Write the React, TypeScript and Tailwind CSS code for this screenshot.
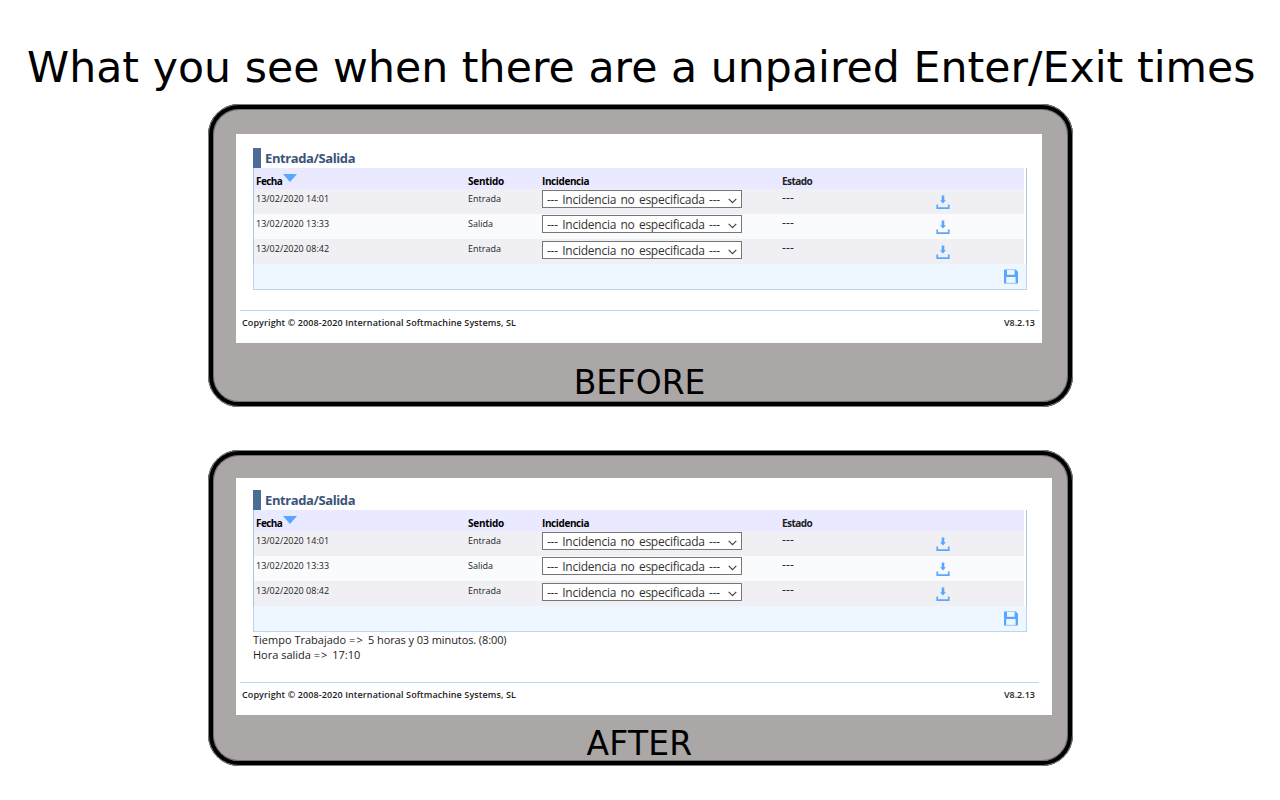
type Punch = { date: string; direction: string };

const punches: Punch[] = [
  { date: '13/02/2020 14:01', direction: 'Entrada' },
  { date: '13/02/2020 13:33', direction: 'Salida' },
  { date: '13/02/2020 08:42', direction: 'Entrada' },
];

const columns = 'grid grid-cols-[212px_74px_240px_154px_1fr] pl-[2px]';

function DownloadIcon() {
  return (
    <svg width="14" height="15" viewBox="0 0 14 15" className="text-[#58a6ff]" fill="currentColor">
      <path d="M5.7 0.6h2.6v4.6h1.6L7 8.6 4.1 5.2h1.6z" />
      <path d="M0.4 9.4h1.7v2.8h9.8V9.4h1.7V14H0.4z" />
    </svg>
  );
}

function SaveIcon() {
  return (
    <svg width="14" height="15" viewBox="0 0 14 15" fill="none">
      <path d="M0 0.5h11.8L14 2.8v11.7H0z" fill="#58a6ff" />
      <path d="M3 1h7.6v4.8H3z" fill="#eef7ff" />
      <path d="M2.2 8h9.4v5.9H2.2z" fill="#eef7ff" />
    </svg>
  );
}

function IncidentSelect({ low }: { low: boolean }) {
  return (
    <button
      className={`flex h-[18px] w-[200px] items-center justify-between border border-[#767676] bg-white pr-[4px] pl-[4px] text-left ${low ? 'mt-[2px]' : 'mt-px'}`}
    >
      <span className={`text-[12px] leading-[16px] tracking-[-0.25px] [word-spacing:1.5px] whitespace-nowrap text-[#333] ${low ? 'pt-px' : 'pt-[2px]'}`}>
        --- Incidencia no especificada ---
      </span>
      <svg width="9" height="6" viewBox="0 0 9 6" fill="none" className="mt-[3px]">
        <path d="M0.7 0.8l3.8 3.8 3.8-3.8" stroke="#444" strokeWidth="1.2" />
      </svg>
    </button>
  );
}

function PunchTable() {
  return (
    <div className="ml-[17px] w-[774px]">
      <div className="flex h-[20px]">
        <div className="w-[8px] bg-[#4b6c97]" />
        <h2 className="pl-[4px] text-[13px] leading-[20px] font-bold tracking-[-0.4px] text-[#3b5479]">Entrada/Salida</h2>
      </div>
      <div className="border-x border-[#b0c4de] pr-[2px]">
        <div className={`${columns} h-[21px] bg-[#e9e9ff] pt-[6px] text-[10px] leading-[14px] font-bold text-black`}>
          <div className="flex">
            <span className="tracking-[-0.6px]">Fecha</span>
            <svg width="14" height="8" viewBox="0 0 14 8" className="ml-[0.5px]">
              <path d="M0 0h14L7 8z" fill="#58a6ff" />
            </svg>
          </div>
          <span className="tracking-[-0.27px]">Sentido</span>
          <span className="tracking-[-0.4px]">Incidencia</span>
          <span className="tracking-[-0.55px] text-[#222]">Estado</span>
        </div>
        {punches.map((punch, index) => (
          <div
            key={punch.date}
            className={`${columns} h-[25px] text-[9px] leading-[14px] text-[#222] ${index % 2 ? 'bg-[#f9fbfd]' : 'bg-[#f0f0f4]'}`}
          >
            <span className="pt-[3px]">{punch.date}</span>
            <span className="pt-[3px]">{punch.direction}</span>
            <IncidentSelect low={index === 2} />
            <span className="pt-[2px] text-[12px] tracking-[0.1px]">---</span>
            <span className="pt-[6px]">
              <DownloadIcon />
            </span>
          </div>
        ))}
      </div>
      <div className="flex h-[26px] justify-end border-x border-b border-[#b9d5ef] bg-[#eef7ff] pt-[5px] pr-[8px]">
        <SaveIcon />
      </div>
    </div>
  );
}

function Footer() {
  return (
    <footer className="ml-[4px] flex w-[799px] justify-between border-t border-[#bcd9f2] pt-[5px] pr-[4px] pl-[2px] text-[9px] leading-[14px] font-semibold text-[#222]">
      <span className="tracking-[0.107px]">Copyright © 2008-2020 International Softmachine Systems, SL</span>
      <span>V8.2.13</span>
    </footer>
  );
}

const frame =
  'ml-[208px] w-[865px] rounded-[31px] border-[5px] border-black bg-[#aba7a6] pt-px pl-px outline -outline-offset-1 outline-[#808080] shadow-[inset_0_0_0_1px_#707070]';

export default function App() {
  return (
    <main className="h-[800px] w-[1280px] overflow-hidden bg-white font-['Open_Sans','Noto_Sans',sans-serif]">
      <h1 className="h-[104px] pt-[42px] pl-[27px] font-['DejaVu_Sans',sans-serif] text-[42.6px] leading-[50px] tracking-[0.05px] whitespace-nowrap text-black">
        What you see when there are a unpaired Enter/Exit times
      </h1>

      <section className={`${frame} h-[303px]`}>
        <div className="mt-[24px] ml-[22px] h-[209px] w-[806px] bg-white pt-[14px]">
          <PunchTable />
          <div className="h-[20px]" />
          <Footer />
        </div>
        <p className="mt-[20px] pr-[3px] text-center font-['DejaVu_Sans',sans-serif] text-[33px] leading-[40px] tracking-[-0.15px] text-black">BEFORE</p>
      </section>

      <section className={`${frame} mt-[43px] h-[316px]`}>
        <div className="mt-[22px] ml-[22px] h-[237px] w-[816px] bg-white pt-[12px]">
          <PunchTable />
          <div className="ml-[17px] h-[50px] text-[11px] leading-[15px] text-[#222]">
            <p>
              Tiempo Trabajado <span className="tracking-[1.2px]">=&gt; </span>
              <span className="tracking-[-0.1px]">5 horas y 03 minutos. (8:00)</span>
            </p>
            <p>
              Hora salida <span className="tracking-[1px]">=&gt; </span>17:10
            </p>
          </div>
          <Footer />
        </div>
        <p className="mt-[9px] pr-[3px] text-center font-['DejaVu_Sans',sans-serif] text-[33px] leading-[40px] tracking-[0.2px] text-black">AFTER</p>
      </section>
    </main>
  );
}
